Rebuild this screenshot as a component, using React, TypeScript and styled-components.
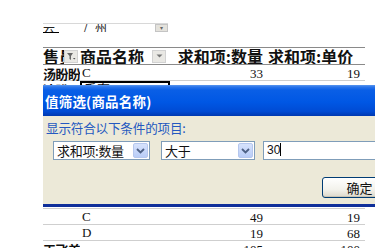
import React from "react";
import styled, { createGlobalStyle } from "styled-components";

const Global = createGlobalStyle`
  html, body { margin: 0; padding: 0; background: #fff; overflow: hidden; }
  body { width: 375px; height: 248px; }
`;

const Page = styled.div`
  position: relative;
  width: 375px;
  height: 248px;
  overflow: hidden;
  padding: 23px 0 0 43px;
  box-sizing: border-box;
  background: #fff;
`;

const TopBand = styled.div`
  display: flex;
  align-items: flex-start;
  width: 125px;
  height: 9px;
  border-top: 1px solid #d8d8d8;
  overflow: hidden;
  font-family: "Noto Sans CJK SC", sans-serif;
  font-size: 12px;
  line-height: 12px;
  color: #222;
`;

const CutText = styled.span<{ $w: number; $under?: boolean }>`
  display: block;
  flex: none;
  width: ${(p) => p.$w}px;
  height: 8px;
  overflow: hidden;
  border-bottom: ${(p) => (p.$under ? "1px solid #000" : "none")};
  line-height: 8px;
`;

const MiniDrop = styled.span`
  margin-left: auto;
  width: 13px;
  height: 8px;
  background: #e4e2dc;
  border: 1px solid #c4c4c4;
  box-sizing: border-box;
  font-size: 6px;
  line-height: 6px;
  color: #666;
  text-align: center;
`;

const Table = styled.div`
  margin-top: 14px;
  width: 322px;
  display: flex;
  flex-direction: column;
`;

const HeaderRow = styled.div`
  display: grid;
  grid-template-columns: 21px 15px 73px 15px 98px 100px;
  height: 16px;
  border-top: 1px solid #8a8a8a;
  border-bottom: 1px solid #8a8a8a;
  font-family: "Noto Sans CJK SC", sans-serif;
  font-weight: 700;
  font-size: 16px;
  line-height: 16px;
  color: #111;
  align-items: center;
`;

const HCell = styled.div<{ $right?: boolean; $pad?: number }>`
  overflow: hidden;
  white-space: nowrap;
  text-align: ${(p) => (p.$right ? "right" : "left")};
  padding-left: ${(p) => p.$pad ?? 0}px;
  padding-right: ${(p) => (p.$right ? 2 : 0)}px;
`;

const HeadBtn = styled.div`
  width: 14px;
  height: 13px;
  background: #e9e8e4;
  border: 1px solid #d2d2d2;
  box-sizing: border-box;
  display: flex;
  align-items: center;
  justify-content: center;
`;

const Row = styled.div`
  display: grid;
  grid-template-columns: 37px 90px 95px 97px;
  height: 16px;
  border-bottom: 1px solid #cfcfcf;
  box-sizing: border-box;
  font-family: "Liberation Serif", serif;
  font-size: 13px;
  line-height: 15px;
  color: #111;
  align-items: center;
`;

const NameCell = styled.div`
  font-family: "Noto Sans CJK SC", sans-serif;
  font-weight: 700;
  font-size: 13px;
  letter-spacing: -0.5px;
  white-space: nowrap;
  overflow: hidden;
`;

const ProdCell = styled.div<{ $sel?: boolean }>`
  padding-left: 2px;
  height: 16px;
  box-sizing: border-box;
  border: ${(p) => (p.$sel ? "2px solid #000" : "none")};
  font-family: ${(p) => (p.$sel ? '"Noto Sans CJK SC", sans-serif' : '"Liberation Serif", serif')};
  line-height: ${(p) => (p.$sel ? "12px" : "15px")};
`;

const NumCell = styled.div`
  text-align: right;
  padding-right: 2px;
`;

const Dialog = styled.div`
  position: absolute;
  left: 43px;
  top: 85px;
  width: 360px;
  display: flex;
  flex-direction: column;
  background: #ece9d8;
  border-bottom: 3px solid #0f2f9a;
  font-family: "Noto Sans CJK SC", sans-serif;
`;

const TitleBar = styled.div`
  height: 31px;
  display: flex;
  align-items: center;
  padding-left: 2px;
  background: linear-gradient(
    #5a97ee 0,
    #2a74ea 2px,
    #0a5fe6 5px,
    #0057e4 55%,
    #004bd4 85%,
    #0038b0 100%
  );
  color: #fff;
  font-weight: 700;
  font-size: 13.5px;
  letter-spacing: 0.2px;
`;

const Body = styled.div`
  display: flex;
  flex-direction: column;
  padding: 4px 0 6px 3px;
`;

const Label = styled.div`
  font-size: 12.6px;
  line-height: 16px;
  color: #2559c0;
  letter-spacing: -0.2px;
`;

const FieldRow = styled.div`
  display: flex;
  align-items: center;
  margin-top: 5px;
  padding-left: 7px;
`;

const Combo = styled.div<{ $w: number; $ml: number }>`
  flex: none;
  width: ${(p) => p.$w}px;
  margin-left: ${(p) => p.$ml}px;
  height: 19px;
  box-sizing: border-box;
  border: 1px solid #7f9db9;
  background: #fff;
  display: flex;
  align-items: center;
  font-size: 13px;
  color: #111;
  padding-left: 3px;
`;

const ComboText = styled.span`
  flex: 1;
  white-space: nowrap;
  letter-spacing: -0.3px;
`;

const ArrowBtn = styled.span`
  flex: none;
  width: 15px;
  height: 15px;
  margin-right: 1px;
  border-radius: 2px;
  background: linear-gradient(#d6e2fc, #b9cdf7);
  border: 1px solid #b5c7ee;
  box-sizing: border-box;
  display: flex;
  align-items: center;
  justify-content: center;
`;

const TextInput = styled.div`
  flex: none;
  width: 120px;
  margin-left: 8px;
  height: 19px;
  box-sizing: border-box;
  border: 1px solid #7f9db9;
  background: #fff;
  font-family: "Liberation Sans", sans-serif;
  font-size: 12px;
  line-height: 17px;
  padding-left: 3px;
  color: #111;
`;

const Caret = styled.span`
  display: inline-block;
  width: 1px;
  height: 13px;
  background: #000;
  vertical-align: -2px;
`;

const ButtonRow = styled.div`
  display: flex;
  justify-content: flex-end;
  margin-top: 17px;
  padding-right: 6px;
`;

const OkButton = styled.div`
  width: 75px;
  height: 21px;
  box-sizing: border-box;
  border: 1px solid #003c74;
  border-radius: 3px;
  background: linear-gradient(#ffffff, #f3f2ec 60%, #dcd8cb);
  box-shadow: inset 0 -1px 0 #c9c4b4;
  font-size: 13px;
  line-height: 19px;
  text-align: center;
  color: #111;
`;

const Chevron = () => (
  <svg width="9" height="6" viewBox="0 0 9 6">
    <path d="M1 1 L4.5 4.5 L8 1" fill="none" stroke="#4d6185" strokeWidth="1.8" />
  </svg>
);

const Funnel = () => (
  <svg width="10" height="9" viewBox="0 0 10 9">
    <path d="M1 1 H7 L5 4 V8 L3.5 7 V4 Z" fill="#666" />
    <path d="M7 6 L9.5 6 L8.25 7.6 Z" fill="#555" />
  </svg>
);

const Tri = () => (
  <svg width="7" height="4" viewBox="0 0 7 4">
    <path d="M0.5 0.5 H6.5 L3.5 3.5 Z" fill="#777" />
  </svg>
);

type R = { name: string; prod: string; qty: string; price: string; sel?: boolean };

const rows: R[] = [
  { name: "汤盼盼", prod: "C", qty: "33", price: "19" },
  { name: "达盼", prod: "手套", qty: "52", price: "15", sel: true },
  { name: "", prod: "A", qty: "", price: "" },
  { name: "", prod: "B", qty: "", price: "" },
  { name: "", prod: "C", qty: "", price: "" },
  { name: "", prod: "D", qty: "", price: "" },
  { name: "", prod: "", qty: "", price: "" },
  { name: "", prod: "", qty: "", price: "" },
  { name: "", prod: "", qty: "", price: "" },
  { name: "", prod: "C", qty: "49", price: "19" },
  { name: "", prod: "D", qty: "19", price: "68" },
  { name: "王飞美", prod: "", qty: "105", price: "100" },
];

export default function App() {
  return (
    <>
      <Global />
      <Page>
        <TopBand>
          <CutText $w={16} $under>云</CutText>
          <CutText $w={24} />
          <CutText $w={12}>/</CutText>
          <CutText $w={20}>州</CutText>
          <MiniDrop>▾</MiniDrop>
        </TopBand>
        <Table>
          <HeaderRow>
            <HCell>售员</HCell>
            <HeadBtn>
              <Funnel />
            </HeadBtn>
            <HCell $pad={1}>商品名称</HCell>
            <HeadBtn>
              <Tri />
            </HeadBtn>
            <HCell $right>求和项:数量</HCell>
            <HCell $pad={3}>求和项:单价</HCell>
          </HeaderRow>
          {rows.map((r, i) => (
            <Row key={i}>
              <NameCell>{r.name}</NameCell>
              <ProdCell $sel={r.sel}>{r.prod}</ProdCell>
              <NumCell>{r.qty}</NumCell>
              <NumCell>{r.price}</NumCell>
            </Row>
          ))}
        </Table>
        <Dialog>
          <TitleBar>值筛选(商品名称)</TitleBar>
          <Body>
            <Label>显示符合以下条件的项目:</Label>
            <FieldRow>
              <Combo $w={97} $ml={0}>
                <ComboText>求和项:数量</ComboText>
                <ArrowBtn>
                  <Chevron />
                </ArrowBtn>
              </Combo>
              <Combo $w={94} $ml={11}>
                <ComboText>大于</ComboText>
                <ArrowBtn>
                  <Chevron />
                </ArrowBtn>
              </Combo>
              <TextInput>
                30
                <Caret />
              </TextInput>
            </FieldRow>
            <ButtonRow>
              <OkButton>确定</OkButton>
            </ButtonRow>
          </Body>
        </Dialog>
      </Page>
    </>
  );
}
